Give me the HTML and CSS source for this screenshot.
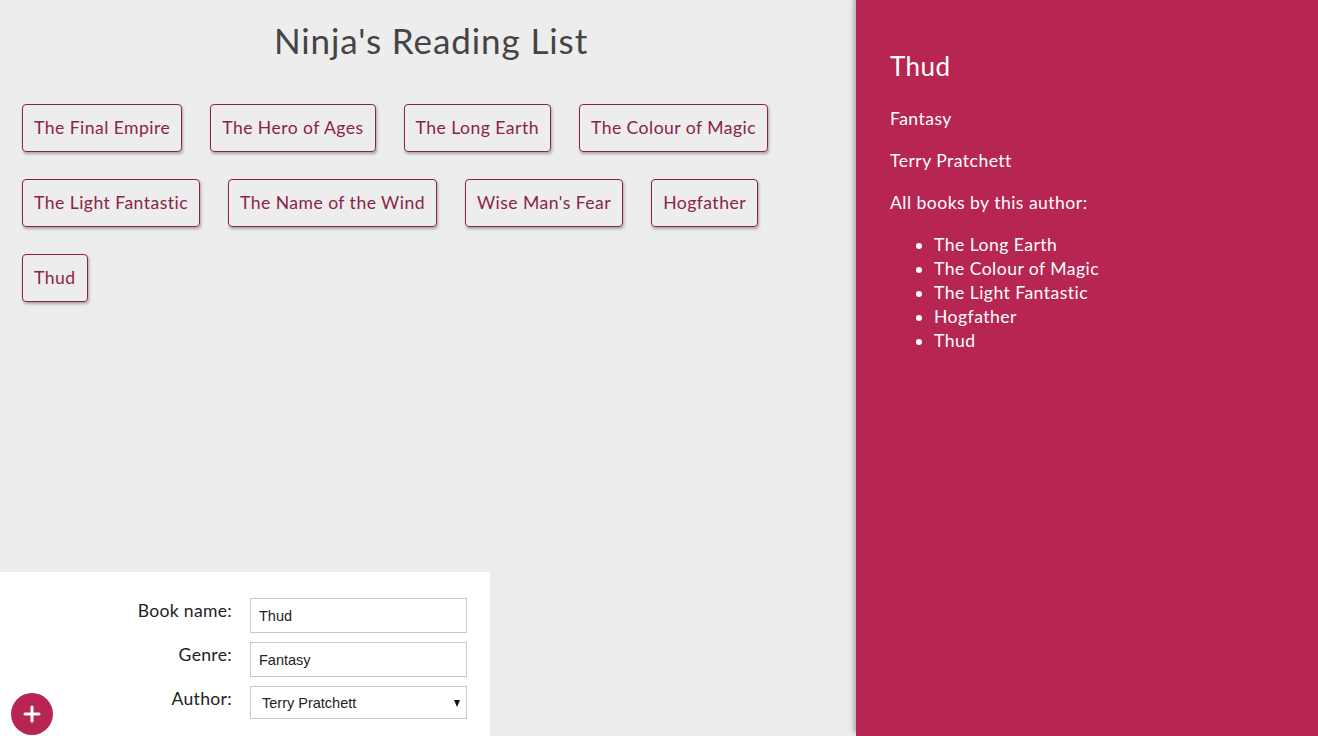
FILE: index.html
```html
<!DOCTYPE html>
<html lang="en">
<head>
<meta charset="utf-8">
<title>Ninja's Reading List</title>
<link rel="stylesheet" href="styles.css">
</head>
<body>
<div class="app">
  <main class="main">
    <h1 class="title">Ninja's Reading List</h1>
    <ul class="book-list">
      <li class="book">The Final Empire</li>
      <li class="book">The Hero of Ages</li>
      <li class="book">The Long Earth</li>
      <li class="book">The Colour of Magic</li>
      <li class="book">The Light Fantastic</li>
      <li class="book">The Name of the Wind</li>
      <li class="book">Wise Man's Fear</li>
      <li class="book">Hogfather</li>
      <li class="book">Thud</li>
    </ul>
    <form class="add-form">
      <label class="label" for="name">Book name:</label>
      <input class="input" id="name" type="text" value="Thud">
      <label class="label" for="genre">Genre:</label>
      <input class="input" id="genre" type="text" value="Fantasy">
      <label class="label" for="author">Author:</label>
      <div class="select-wrap">
        <select class="select" id="author">
          <option>Terry Pratchett</option>
        </select>
      </div>
      <button class="add-btn" type="button" aria-label="Add book">
        <svg width="20" height="20" viewBox="0 0 20 20"><path d="M10 3v14M3 10h14" stroke="#fff" stroke-width="3" stroke-linecap="round" fill="none"/></svg>
      </button>
    </form>
  </main>
  <aside class="details">
    <h2 class="details-title">Thud</h2>
    <p class="details-text">Fantasy</p>
    <p class="details-text">Terry Pratchett</p>
    <p class="details-text">All books by this author:</p>
    <ul class="author-books">
      <li>The Long Earth</li>
      <li>The Colour of Magic</li>
      <li>The Light Fantastic</li>
      <li>Hogfather</li>
      <li>Thud</li>
    </ul>
  </aside>
</div>
</body>
</html>
```
FILE: styles.css
```css
* { box-sizing: border-box; }
html, body { margin: 0; padding: 0; }
body {
  background: #ededed;
  font-family: Lato, "Noto Sans", sans-serif;
  width: 1318px;
  height: 736px;
  overflow: hidden;
}
.app {
  display: flex;
  height: 736px;
}
.main {
  width: 856px;
  height: 736px;
  display: flex;
  flex-direction: column;
}
.title {
  margin: 20px 0 0;
  font-size: 35px;
  line-height: 40px;
  font-weight: 400;
  letter-spacing: 0.9px;
  color: #444;
  text-align: center;
  padding-left: 6px;
}
.book-list {
  list-style: none;
  margin: 44px 0 0;
  padding: 0 22px;
  display: flex;
  flex-wrap: wrap;
  column-gap: 28px;
  row-gap: 27px;
}
.book {
  padding: 10px 11px;
  line-height: 26px;
  font-size: 17.6px;
  letter-spacing: 0.45px;
  color: #8b2347;
  border: 1px solid #8b2347;
  border-radius: 4px;
  box-shadow: 1px 2px 3px rgba(0,0,0,0.3);
}
.add-form {
  margin-top: auto;
  width: 490px;
  height: 164px;
  background: #fff;
  padding: 26px 23px 0 20px;
  display: grid;
  grid-template-columns: 218px 217px;
  grid-auto-rows: 35px;
  column-gap: 12px;
  row-gap: 9px;
  position: relative;
}
.label {
  text-align: right;
  padding-right: 6px;
  font-size: 17.6px;
  letter-spacing: 0.3px;
  color: #222;
  line-height: 26px;
}
.input, .select {
  font-family: Arial, "Liberation Sans", sans-serif;
  font-size: 14.5px;
  color: #222;
  border: 1px solid #c8c8c8;
  background: #fff;
  height: 35px;
  width: 217px;
  padding: 0 8px;
  margin: 0;
  border-radius: 0;
}
.select-wrap {
  position: relative;
  height: 33px;
}
.select {
  height: 33px;
  appearance: none;
  -webkit-appearance: none;
  padding: 0 11px;
}
.select-wrap::after {
  content: "";
  position: absolute;
  right: 7px;
  top: 14px;
  border-left: 3.5px solid transparent;
  border-right: 3.5px solid transparent;
  border-top: 7px solid #111;
}
.add-btn {
  position: absolute;
  left: 11px;
  bottom: 1px;
  width: 42px;
  height: 42px;
  border-radius: 50%;
  border: 0;
  background: #b72552;
  display: flex;
  align-items: center;
  justify-content: center;
  padding: 0;
}
.details {
  width: 462px;
  height: 736px;
  background: #b72552;
  color: #fff;
  padding: 30px 34px;
  box-shadow: -2px -3px 5px rgba(0,0,0,0.3);
  font-size: 17.6px;
  line-height: 24px;
  letter-spacing: 0.45px;
}
.details-title {
  margin: 20px 0 25px;
  font-size: 26px;
  line-height: 32px;
  font-weight: 400;
}
.details-text {
  margin: 18px 0;
}
.author-books {
  margin: 17px 0 0;
  padding-left: 44px;
}
```
